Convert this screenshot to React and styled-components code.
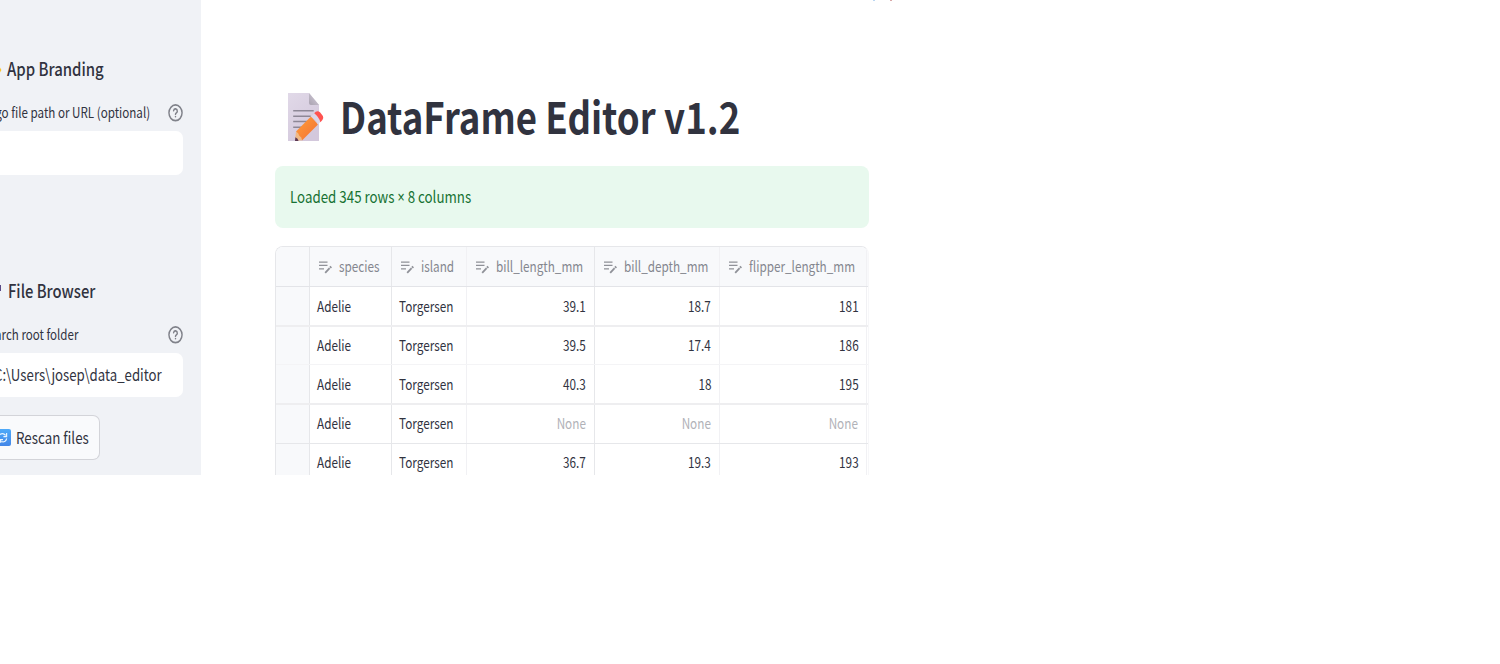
import React from "react";
import styled, { createGlobalStyle } from "styled-components";

const Global = createGlobalStyle`
  * { box-sizing: border-box; }
  body { margin: 0; background: #fff; overflow: hidden; }
  svg { flex: none; }
  #root { font-family: "Noto Sans CJK SC", "Noto Sans", sans-serif; color: #31333f; }
`;

const Page = styled.div`
  display: flex;
  width: 900px;
  height: 475px;
  overflow: hidden;
`;

const Text = styled.span`
  display: inline-block;
  flex: none;
  white-space: nowrap;
  font-size: ${(p) => p.$size || 16.5}px;
  font-weight: ${(p) => p.$weight || 400};
  color: ${(p) => p.$color || "#31333f"};
  transform: translateY(${(p) => p.$dy ?? -1}px) scaleX(${(p) => p.$sx || 0.808});
  transform-origin: ${(p) => p.$origin || "left"} center;
`;

const CellText = styled(Text)`
  font-size: 14.8px;
  transform: translateY(${(p) => p.$dy ?? -1}px) scaleX(0.793);
`;

const Times = styled.span`
  font-family: "Noto Sans", sans-serif;
  line-height: 1;
  font-size: 15.5px;
`;

const Sidebar = styled.aside`
  flex: none;
  width: 201px;
  height: 475px;
  background: #f0f2f6;
  overflow: hidden;
`;

const Section = styled.section`
  height: ${(p) => p.$height}px;
  padding-top: ${(p) => p.$top}px;
`;

const SectionTitle = styled.h3`
  display: flex;
  align-items: center;
  height: 30px;
  margin: 0;
  gap: ${(p) => p.$gap}px;
`;

const LabelRow = styled.div`
  display: flex;
  align-items: center;
  height: 20px;
  margin-top: 18px;
  width: 183px;
`;

const LabelText = styled.div`
  flex: none;
  width: 168px;
  margin-left: ${(p) => p.$left}px;
  margin-right: ${(p) => -p.$left}px;
  display: flex;
`;

const Input = styled.div`
  display: flex;
  align-items: center;
  width: 183px;
  height: 44px;
  margin-top: 8px;
  background: #fff;
  border-radius: 0 7px 7px 0;
  overflow: hidden;
`;

const Shift = styled.div`
  display: flex;
  margin-left: ${(p) => p.$left}px;
`;

const Button = styled.div`
  display: flex;
  align-items: center;
  width: 100px;
  height: 45px;
  margin-top: 18px;
  gap: 5px;
  background: #f9fafc;
  border: 1px solid #d3d4d9;
  border-left: 0;
  border-radius: 0 7px 7px 0;
  overflow: hidden;
`;

const Main = styled.main`
  flex: none;
  width: 668px;
  padding-left: 74px;
`;

/* Holds the fragments of the header menu that reach into view at the top edge. */
const Toolbar = styled.div`
  display: flex;
  gap: 15px;
  width: 620px;
  height: 91px;
  padding-left: 598px;
`;

const Speck = styled.i`
  flex: none;
  width: 2px;
  height: 1px;
  background: ${(p) => p.$color};
`;

const TitleRow = styled.h1`
  display: flex;
  align-items: center;
  height: 51px;
  margin: 0;
  padding-left: 13px;
  gap: 16px;
`;

const Alert = styled.div`
  display: flex;
  align-items: center;
  height: 62px;
  margin-top: 24px;
  padding-left: 15px;
  background: #e8f9ee;
  border-radius: 8px;
`;

const Table = styled.div`
  margin-top: 18px;
  height: 300px;
  border: 1px solid #e6e7ea;
  border-right-color: #f7f7f9;
  border-radius: 8px;
  overflow: hidden;
`;

const Row = styled.div`
  display: grid;
  grid-template-columns: 34px 82px 75px 128px 125px 147px 1fr;
  height: ${(p) => p.$height}px;
  background: ${(p) => (p.$head ? "#f8f9fb" : "#fff")};
  border-bottom: ${(p) => p.$line}px solid ${(p) => p.$lineColor};
`;

const Cell = styled.div`
  display: flex;
  align-items: center;
  min-width: 0;
  justify-content: ${(p) => (p.$right ? "flex-end" : "flex-start")};
  padding: 0 7.8px 0 7px;
  border-right: 1px solid ${(p) => (p.$light ? "#f1f1f4" : "#e6e7ea")};
  background: ${(p) => (p.$index ? "#f8f9fb" : "transparent")};
`;

const HeadCell = styled(Cell)`
  padding: 0 0 0 8px;
  gap: 6.5px;
`;

const LastCell = styled.div``;

const Help = () => (
  <svg width="15" height="18" viewBox="0 0 24 24" preserveAspectRatio="none" fill="none" stroke="#80828a" strokeWidth="2.3" strokeLinecap="round">
    <circle cx="12" cy="11.8" r="10.5" />
    <path d="M9 8.8a3 3 0 0 1 5.9.8c0 2-2.9 2.3-2.9 4" />
    <path d="M12 16.8h.01" />
  </svg>
);

const EditIcon = () => (
  <svg width="14" height="14" viewBox="0 0 14 14" fill="none" stroke="#8f9198" strokeWidth="1.2">
    <path d="M1 2.1h8.5M1 5.4h8.5M1 8.8h5" />
    <path d="M7.2 12.9l4.4-4.8" strokeWidth="1.8" />
    <path d="M12.1 7.7l1.1-1.2" strokeWidth="2.1" />
  </svg>
);

const Memo = () => (
  <svg width="36" height="49" viewBox="0 0 36 49">
    <defs>
      <linearGradient id="paper" x1="0" y1="0" x2="0.6" y2="1">
        <stop offset="0" stopColor="#e1d9e8" />
        <stop offset="1" stopColor="#d3c8dc" />
      </linearGradient>
      <linearGradient id="fold" x1="0" y1="1" x2="1" y2="0">
        <stop offset="0" stopColor="#aaa3b1" />
        <stop offset="1" stopColor="#d5cfdb" />
      </linearGradient>
      <linearGradient id="pencil" x1="0" y1="0" x2="1" y2="1">
        <stop offset="0" stopColor="#ffa038" />
        <stop offset="1" stopColor="#f36e35" />
      </linearGradient>
    </defs>
    <path d="M0 1h21l10 12v36H0z" fill="url(#paper)" />
    <path d="M21 1l10 12h-8q-2 0-2-2z" fill="url(#fold)" />
    <path d="M5.2 18.7h20.5M5.2 24.2h17.5M5.2 29.6h15M5.2 35.2h9" stroke="#8d8796" strokeWidth="1.5" />
    <path d="M8 39.5L23 24.5l7 8L14 48.5z" fill="url(#pencil)" />
    <path d="M8 39.5L7 48.8l7-.6q0-3-2.7-4.4-.6-3-3.3-4.3z" fill="#f0b985" />
    <path d="M7.4 45.2L7 49h3.6q-.6-2.8-3.2-3.8z" fill="#5b3752" />
    <path d="M23 24.8l3.6-4 6.7 8.2-3.5 3.6q-1.2-5.4-6.8-7.8z" fill="#dcd6e8" />
    <path d="M26.2 21.2l1.6-1.5q2.4-1.4 4.4.9l2.7 3.5q1 2-.5 4l-2 2.2q-1.4-5.5-6.2-9.1z" fill="#ff5350" />
  </svg>
);

const Refresh = () => (
  <svg width="11" height="17" viewBox="0 0 11 17">
    <defs>
      <linearGradient id="blue" x1="0" y1="0" x2="0" y2="1">
        <stop offset="0" stopColor="#4eaaf9" />
        <stop offset="1" stopColor="#4386e8" />
      </linearGradient>
    </defs>
    <path d="M0 0h9q2 0 2 2v13q0 2-2 2H0z" fill="url(#blue)" />
    <path d="M0 5.4q3.2-2 5.6 1M6.6 4v3.6H3.4M6.7 9.5q-1.2 4.5-5.7 3M0.6 13.8V10.6h2.4" fill="none" stroke="#e8f4ff" strokeWidth="1.2" />
  </svg>
);

const Palette = () => (
  <svg width="2" height="6" viewBox="0 0 2 6"><path d="M0 .5l1.4 2.5L0 5.5z" fill="#fbc62c" /></svg>
);

const Folder = () => (
  <svg width="2" height="14" viewBox="0 0 2 14"><path d="M0 0h1v6H0z" fill="#5a4a86" /></svg>
);

const columns = ["species", "island", "bill_length_mm", "bill_depth_mm", "flipper_length_mm"];
const rows = [
  { height: 40, line: 2, dy: -1.5, color: "#eeeef0", data: ["39.1", "18.7", "181"] },
  { height: 38, line: 1, dy: -1, color: "#f4f4f6", data: ["39.5", "17.4", "186"] },
  { height: 40, line: 2, dy: -1, color: "#eeeef0", data: ["40.3", "18", "195"] },
  { height: 39, line: 1, dy: -2, color: "#e6e7ea", data: ["None", "None", "None"] },
  { height: 39, line: 1, dy: -2, color: "#e6e7ea", data: ["36.7", "19.3", "193"] },
];

export default function App() {
  return (
    <>
      <Global />
      <Page>
        <Sidebar>
          <Section $height={277} $top={55}>
            <SectionTitle $gap={5}>
              <Palette />
              <Text $size={18} $weight={500} $dy={-2} $sx={0.83}>App Branding</Text>
            </SectionTitle>
            <LabelRow>
              <LabelText $left={-18}><Text $size={14.4} $dy={-2} $sx={0.807}>Logo file path or URL (optional)</Text></LabelText>
              <Help />
            </LabelRow>
            <Input />
          </Section>
          <Section $height={198} $top={0}>
            <SectionTitle $gap={6}>
              <Folder />
              <Text $size={18} $weight={500} $dy={-2} $sx={0.822}>File Browser</Text>
            </SectionTitle>
            <LabelRow>
              <LabelText $left={-18}><Text $size={14.4} $dy={-2} $sx={0.802}>Search root folder</Text></LabelText>
              <Help />
            </LabelRow>
            <Input><Shift $left={-6}><Text $sx={0.802}>C:\Users\josep\data_editor</Text></Shift></Input>
            <Button><Refresh /><Text $dy={-1} $sx={0.81}>Rescan files</Text></Button>
          </Section>
        </Sidebar>
        <Main>
          <Toolbar><Speck $color="#bcd7f2" /><Speck $color="#d9a8a8" /></Toolbar>
          <TitleRow>
            <Memo />
            <Text $size={43.5} $weight={700} $dy={-1.5} $sx={0.842}>DataFrame Editor v1.2</Text>
          </TitleRow>
          <Alert><Text $color="#177233">Loaded 345 rows <Times>×</Times> 8 columns</Text></Alert>
          <Table>
            <Row $head $height={40} $line={1} $lineColor="#e3e4e8">
              <Cell $index />
              {columns.map((name, i) => (
                <HeadCell key={name} $light={i === 1 || i > 2}>
                  <EditIcon />
                  <CellText $color="#85878f">{name}</CellText>
                </HeadCell>
              ))}
              <LastCell />
            </Row>
            {rows.map((row, r) => (
              <Row key={r} $height={row.height} $line={row.line} $lineColor={row.color}>
                <Cell $index />
                <Cell><CellText $dy={row.dy}>Adelie</CellText></Cell>
                <Cell $light><CellText $dy={row.dy}>Torgersen</CellText></Cell>
                {row.data.map((value, i) => (
                  <Cell key={i} $right $light={i > 0}>
                    <CellText $dy={row.dy} $origin="right" $color={value === "None" ? "#b1b2b8" : undefined}>{value}</CellText>
                  </Cell>
                ))}
                <LastCell />
              </Row>
            ))}
          </Table>
        </Main>
      </Page>
    </>
  );
}
